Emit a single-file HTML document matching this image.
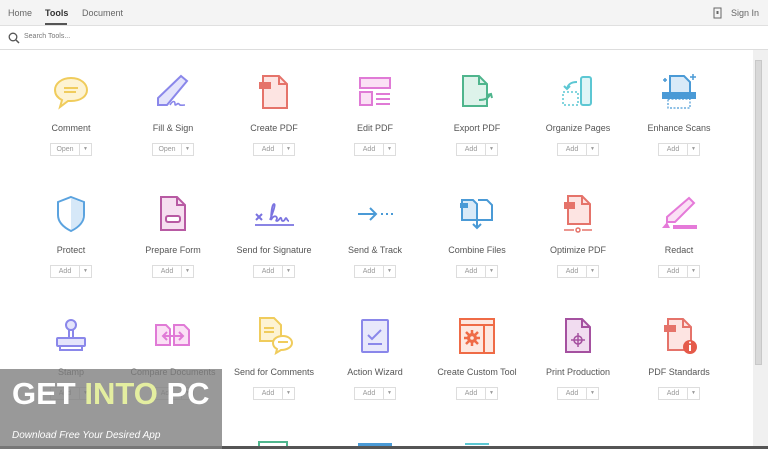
<!DOCTYPE html>
<html><head><style>
*{margin:0;padding:0;box-sizing:border-box}
body{width:768px;height:449px;overflow:hidden;background:#fff;font-family:"Liberation Sans",sans-serif;position:relative;color:#555}
.top{position:absolute;left:0;top:0;width:768px;height:26px;background:#f4f4f4;border-bottom:1px solid #e0e0e0}
.top span{position:absolute;top:8px;font-size:9px;color:#666}
.srch{position:absolute;left:0;top:26px;width:768px;height:24px;background:#fff;border-bottom:1px solid #ddd}
.t{position:absolute;width:100px;text-align:center}
.t svg{display:block;margin:0 auto;width:40px;height:40px}
.t .l{margin-top:10px;height:12px;font-size:9px;color:#555;line-height:12px}
.b{margin:9px auto 0;width:42px;height:13px;border:1px solid #ddd;font-size:7px;color:#999;line-height:11px;display:flex}
.b i{font-style:normal;flex:1;border-right:1px solid #ddd}
.b u{text-decoration:none;width:11px;font-size:5px}
.wm{position:absolute;left:0;top:369px;width:222px;height:80px;background:rgba(128,128,128,.8)}
</style></head><body>
<div class="top">
<span style="left:8px">Home</span>
<span style="left:45px;color:#333;font-weight:bold">Tools</span>
<div style="position:absolute;left:45px;top:23px;width:22px;height:2px;background:#555"></div>
<span style="left:82px">Document</span>
<svg style="position:absolute;left:713px;top:7px" width="9" height="12"><rect x="1" y="1" width="7" height="10" fill="none" stroke="#666"/><rect x="3.5" y="4" width="2" height="3" fill="#666"/></svg>
<span style="left:731px">Sign In</span>
</div>
<div class="srch">
<svg style="position:absolute;left:8px;top:6px" width="12" height="12"><circle cx="5" cy="5" r="3.8" fill="none" stroke="#555" stroke-width="1.3"/><line x1="8" y1="8" x2="11" y2="11" stroke="#555" stroke-width="1.5"/></svg>
<span style="position:absolute;left:24px;top:7px;font-size:7px;color:#777">Search Tools...</span>
</div>
<div style="position:absolute;left:753px;top:50px;width:15px;height:397px;background:#f0f0f0"></div>
<div style="position:absolute;left:755px;top:60px;width:7px;height:305px;background:#d8d8d8;border:1px solid #c8c8c8"></div>
<div style="position:absolute;left:0;top:446px;width:768px;height:3px;background:#555"></div>

<!-- Row 1 -->
<div class="t" style="left:21px;top:72px"><svg viewBox="0 0 40 40"><path d="M20 6C10 6 4 12 4 18c0 5 3 8 7 10l-2 7 8-6h3c10 0 16-5 16-11S30 6 20 6z" fill="#fdf3d3" stroke="#f0cc5c" stroke-width="2"/><line x1="13" y1="16" x2="27" y2="16" stroke="#f0cc5c" stroke-width="2"/><line x1="13" y1="20" x2="25" y2="20" stroke="#f0cc5c" stroke-width="2"/></svg><div class="l">Comment</div><div class="b"><i>Open</i><u>▼</u></div></div>
<div class="t" style="left:123px;top:72px"><svg viewBox="0 0 40 40"><path d="M28 4l6 5L14 33H5v-7z" fill="#e4e4fb" stroke="#8a87ea" stroke-width="2"/><path d="M17 33c3-5 5-4 5-1s3-2 4 0 3 1 6 1" fill="none" stroke="#8a87ea" stroke-width="1.6"/></svg><div class="l">Fill &amp; Sign</div><div class="b"><i>Open</i><u>▼</u></div></div>
<div class="t" style="left:224px;top:72px"><svg viewBox="0 0 40 40"><path d="M9 4h16l8 8v24H9z" fill="#fde4e2" stroke="#e5736a" stroke-width="2"/><path d="M25 4v8h8" fill="none" stroke="#e5736a" stroke-width="2"/><rect x="5" y="10" width="12" height="7" fill="#e5736a"/></svg><div class="l">Create PDF</div><div class="b"><i>Add</i><u>▼</u></div></div>
<div class="t" style="left:325px;top:72px"><svg viewBox="0 0 40 40"><rect x="5" y="6" width="30" height="10" fill="#fbe0f5" stroke="#e07ad6" stroke-width="2"/><rect x="5" y="20" width="12" height="13" fill="#fbe0f5" stroke="#e07ad6" stroke-width="2"/><path d="M21 22h14M21 27h14M21 32h14" stroke="#e07ad6" stroke-width="2"/></svg><div class="l">Edit PDF</div><div class="b"><i>Add</i><u>▼</u></div></div>
<div class="t" style="left:427px;top:72px"><svg viewBox="0 0 40 40"><path d="M6 4h16l8 8v22H6z" fill="#ddf3ea" stroke="#4fb58d" stroke-width="2"/><path d="M22 4v8h8" fill="none" stroke="#4fb58d" stroke-width="2"/><path d="M22 28c6 0 10-2 11-6m-3 1l4-1 1 4" fill="none" stroke="#4fb58d" stroke-width="2"/></svg><div class="l">Export PDF</div><div class="b"><i>Add</i><u>▼</u></div></div>
<div class="t" style="left:528px;top:72px"><svg viewBox="0 0 40 40"><rect x="23" y="5" width="10" height="28" rx="2" fill="#dff5f7" stroke="#5cc7d3" stroke-width="2"/><rect x="5" y="20" width="15" height="13" fill="none" stroke="#5cc7d3" stroke-width="1.5" stroke-dasharray="2 2"/><path d="M19 10c-6 0-9 2-10 7m-3-3l3 3 3-3" fill="none" stroke="#5cc7d3" stroke-width="2"/></svg><div class="l">Organize Pages</div><div class="b"><i>Add</i><u>▼</u></div></div>
<div class="t" style="left:629px;top:72px"><svg viewBox="0 0 40 40"><path d="M11 4h14l6 6v12H11z" fill="#d9eaf8" stroke="#4a9ad6" stroke-width="2"/><rect x="3" y="20" width="34" height="7" fill="#4a9ad6"/><rect x="9" y="27" width="22" height="9" fill="none" stroke="#4a9ad6" stroke-width="1.2" stroke-dasharray="2 1.5"/><path d="M34 2v6M31 5h6M6 6v4M4 8h4" stroke="#4a9ad6" stroke-width="1.5"/></svg><div class="l">Enhance Scans</div><div class="b"><i>Add</i><u>▼</u></div></div>

<!-- Row 2 -->
<div class="t" style="left:21px;top:194px"><svg viewBox="0 0 40 40"><path d="M20 3l13 5v13c0 8-7 13-13 16C14 34 7 29 7 21V8z" fill="#fff" stroke="#5ba3df" stroke-width="2"/><path d="M20 4l12 5v12c0 7-6 12-12 15z" fill="#d6e8f8"/></svg><div class="l">Protect</div><div class="b"><i>Add</i><u>▼</u></div></div>
<div class="t" style="left:123px;top:194px"><svg viewBox="0 0 40 40"><path d="M8 3h16l8 8v25H8z" fill="#f6dff0" stroke="#b85aa3" stroke-width="2"/><path d="M24 3v8h8" fill="none" stroke="#b85aa3" stroke-width="2"/><rect x="13" y="22" width="14" height="6" rx="2" fill="#fff" stroke="#b85aa3" stroke-width="2"/></svg><div class="l">Prepare Form</div><div class="b"><i>Add</i><u>▼</u></div></div>
<div class="t" style="left:224px;top:194px"><svg viewBox="0 0 40 40"><path d="M2 20l6 6M8 20l-6 6" stroke="#7a73e0" stroke-width="2"/><path d="M16 26c3-8 6-16 4-16s-3 10-3 16c2-4 5-5 6-2 0 2-2 3 0 3s3-4 4-3 0 3 2 3 2-3 3-3 1 3 3 3" fill="none" stroke="#7a73e0" stroke-width="1.8"/><line x1="1" y1="31" x2="40" y2="31" stroke="#7a73e0" stroke-width="1.8"/></svg><div class="l">Send for Signature</div><div class="b"><i>Add</i><u>▼</u></div></div>
<div class="t" style="left:325px;top:194px"><svg viewBox="0 0 40 40"><path d="M3 20h18M15 14l6 6-6 6" fill="none" stroke="#4a9ad6" stroke-width="2"/><path d="M26 20h2M31 20h2M36 20h2" stroke="#4a9ad6" stroke-width="2"/></svg><div class="l">Send &amp; Track</div><div class="b"><i>Add</i><u>▼</u></div></div>
<div class="t" style="left:427px;top:194px"><svg viewBox="0 0 40 40"><path d="M5 6h11l4 4v16H5z" fill="#d9eaf8" stroke="#4a9ad6" stroke-width="2"/><path d="M21 6h9l5 5v15H21" fill="#fff" stroke="#4a9ad6" stroke-width="2"/><rect x="3" y="9" width="8" height="5" fill="#4a9ad6"/><path d="M20 22v12M16 30l4 4 4-4" fill="none" stroke="#4a9ad6" stroke-width="2"/></svg><div class="l">Combine Files</div><div class="b"><i>Add</i><u>▼</u></div></div>
<div class="t" style="left:528px;top:194px"><svg viewBox="0 0 40 40"><path d="M10 2h14l8 8v20H10z" fill="#fde4e2" stroke="#e5736a" stroke-width="2"/><path d="M24 2v8h8" fill="none" stroke="#e5736a" stroke-width="2"/><rect x="6" y="8" width="11" height="7" fill="#e5736a"/><path d="M6 36h10M24 36h10" stroke="#e5736a" stroke-width="1.5"/><circle cx="20" cy="36" r="2" fill="none" stroke="#e5736a" stroke-width="1.5"/></svg><div class="l">Optimize PDF</div><div class="b"><i>Add</i><u>▼</u></div></div>
<div class="t" style="left:629px;top:194px"><svg viewBox="0 0 40 40"><path d="M30 4l5 5-19 19H8v-5z" fill="#fbe0f5" stroke="#e57ad9" stroke-width="2"/><path d="M8 28l-5 6h8z" fill="#e57ad9"/><rect x="14" y="31" width="24" height="4" fill="#e57ad9"/></svg><div class="l">Redact</div><div class="b"><i>Add</i><u>▼</u></div></div>

<!-- Row 3 -->
<div class="t" style="left:21px;top:316px"><svg viewBox="0 0 40 40"><circle cx="20" cy="9" r="5" fill="#e4e4fb" stroke="#8a87ea" stroke-width="2"/><path d="M18 14v8M22 14v8" stroke="#8a87ea" stroke-width="2"/><rect x="6" y="22" width="28" height="8" rx="1" fill="#e4e4fb" stroke="#8a87ea" stroke-width="2"/><path d="M9 30v4h22v-4" fill="none" stroke="#8a87ea" stroke-width="2"/></svg><div class="l">Stamp</div><div class="b"><i>Add</i><u>▼</u></div></div>
<div class="t" style="left:123px;top:316px"><svg viewBox="0 0 40 40"><path d="M3 9h10l4 4v16H3z" fill="#fbe0f5" stroke="#e07ad6" stroke-width="2"/><path d="M21 9h10l5 5v15H21z" fill="#fbe0f5" stroke="#e07ad6" stroke-width="2"/><path d="M10 20h20M14 16l-4 4 4 4M26 16l4 4-4 4" fill="none" stroke="#e07ad6" stroke-width="2"/></svg><div class="l">Compare Documents</div><div class="b"><i>Add</i><u>▼</u></div></div>
<div class="t" style="left:224px;top:316px"><svg viewBox="0 0 40 40"><path d="M6 2h14l7 7v16H6z" fill="#fdf3d3" stroke="#f0cc5c" stroke-width="2"/><path d="M10 12h10M10 16h10" stroke="#f0cc5c" stroke-width="2"/><path d="M29 20c-6 0-10 3-10 7 0 3 2 5 4 6l-1 4 5-3c6 0 11-3 11-7s-4-7-9-7z" fill="#fff" stroke="#f0cc5c" stroke-width="2"/><path d="M24 26h10" stroke="#f0cc5c" stroke-width="2"/></svg><div class="l">Send for Comments</div><div class="b"><i>Add</i><u>▼</u></div></div>
<div class="t" style="left:325px;top:316px"><svg viewBox="0 0 40 40"><rect x="7" y="4" width="26" height="32" rx="1" fill="#e8e8fb" stroke="#8a87ea" stroke-width="2"/><path d="M13 19l4 4 9-9M13 28h14" fill="none" stroke="#8a87ea" stroke-width="2"/></svg><div class="l">Action Wizard</div><div class="b"><i>Add</i><u>▼</u></div></div>
<div class="t" style="left:427px;top:316px"><svg viewBox="0 0 40 40"><rect x="3" y="3" width="34" height="34" fill="#fde8e0" stroke="#ef6b46" stroke-width="2"/><path d="M3 9h34M27 9v28" stroke="#ef6b46" stroke-width="2"/><circle cx="15" cy="22" r="5" fill="#ef6b46"/><path d="M15 14v16M7 22h16M9 16l12 12M21 16L9 28" stroke="#ef6b46" stroke-width="2.5"/><circle cx="15" cy="22" r="1.8" fill="#fde8e0"/></svg><div class="l">Create Custom Tool</div><div class="b"><i>Add</i><u>▼</u></div></div>
<div class="t" style="left:528px;top:316px"><svg viewBox="0 0 40 40"><path d="M8 3h16l8 8v25H8z" fill="#f1dcf0" stroke="#a551a0" stroke-width="2"/><path d="M24 3v8h8" fill="none" stroke="#a551a0" stroke-width="2"/><circle cx="20" cy="24" r="4" fill="none" stroke="#a551a0" stroke-width="1.5"/><path d="M20 17v14M13 24h14" stroke="#a551a0" stroke-width="1.5"/></svg><div class="l">Print Production</div><div class="b"><i>Add</i><u>▼</u></div></div>
<div class="t" style="left:629px;top:316px"><svg viewBox="0 0 40 40"><path d="M9 3h15l8 8v23H9z" fill="#fde4e2" stroke="#e5736a" stroke-width="2"/><path d="M24 3v8h8" fill="none" stroke="#e5736a" stroke-width="2"/><rect x="5" y="9" width="12" height="7" fill="#e5736a"/><circle cx="31" cy="31" r="7" fill="#e55a4a"/><path d="M31 29v6" stroke="#fff" stroke-width="2"/><circle cx="31" cy="26.5" r="1" fill="#fff"/></svg><div class="l">PDF Standards</div><div class="b"><i>Add</i><u>▼</u></div></div>

<div style="position:absolute;left:258px;top:441px;width:30px;height:5px;border:2px solid #4fb58d;border-bottom:none"></div>
<div style="position:absolute;left:358px;top:443px;width:34px;height:3px;background:#4a9ad6"></div>
<div style="position:absolute;left:465px;top:443px;width:24px;height:2px;background:#5cc7d3"></div>

<div class="wm">
<div style="position:absolute;left:12px;top:7px;font-size:31px;font-weight:bold;color:#fff">GET <span style="color:#e4eea0">INTO</span> PC</div>
<div style="position:absolute;left:12px;top:61px;font-size:10px;font-style:italic;color:#fff">Download Free Your Desired App</div>
</div>
</body></html>
